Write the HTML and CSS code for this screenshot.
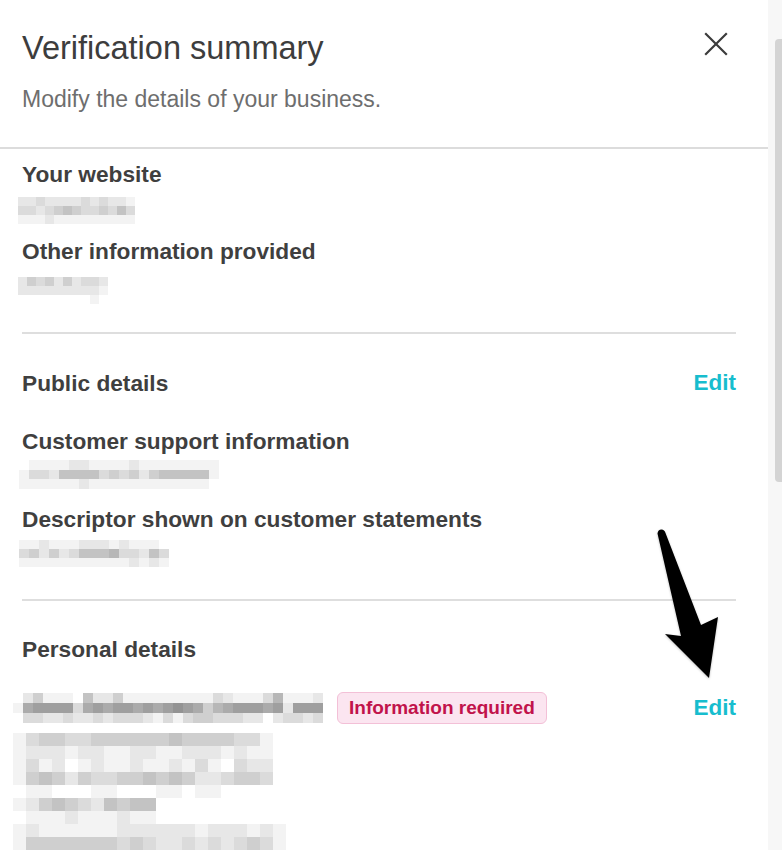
FILE: index.html
```html
<!DOCTYPE html>
<html lang="en">
<head>
<meta charset="utf-8">
<title>Verification summary</title>
<link rel="stylesheet" href="styles.css">
</head>
<body>
<div class="window">
  <main class="panel">
    <header class="head">
      <div class="head-row">
        <h1 class="title">Verification summary</h1>
        <button class="close" aria-label="Close">
          <svg viewBox="0 0 24 24" width="24" height="24"><path d="M1.2 1.2 L22.8 22.8 M22.8 1.2 L1.2 22.8" fill="none" stroke="#3c3c3c" stroke-width="2.2"/></svg>
        </button>
      </div>
      <p class="subtitle">Modify the details of your business.</p>
    </header>

    <section class="section s-business">
      <h3 class="label">Your website</h3>
      <div class="mosaic m-web" data-rows="22322223232210|33234543343530|11121111111110"></div>
      <h3 class="label l-other">Other information provided</h3>
      <div class="mosaic m-other" data-rows="2434242332|2222222221|0000000010"></div>
    </section>

    <section class="section s-public">
      <div class="section-head">
        <h2 class="label">Public details</h2>
        <a class="edit" href="#">Edit</a>
      </div>
      <h3 class="label l-support">Customer support information</h3>
      <div class="mosaic m-support" data-rows="01111221111211111111|13325555343424555551|11111121111111111110"></div>
      <h3 class="label l-desc">Descriptor shown on customer statements</h3>
      <div class="mosaic m-desc" data-rows="112111222121110|342423555633253|111111111112121"></div>
    </section>

    <section class="section s-personal">
      <h2 class="label">Personal details</h2>
      <div class="person-row">
        <div class="mosaic m-name" data-rows="0241110522411111111132111361112|1788883787887878987467888782888|0332232232333213134433322023323"></div>
        <span class="badge">Information required</span>
        <a class="edit" href="#">Edit</a>
      </div>
      <div class="mosaic m-block" data-rows="1344334444445444433100|1222122112211222121100|1312012112112131032200|1454243344545422344300|0110001100011011000000|1245432545500000000000|0111211121100000000000|1211111122222212221210|1444444434322323234310"></div>
    </section>

    <svg class="arrow" viewBox="0 0 100 180" width="100" height="180" aria-hidden="true">
      <path d="M17.5 13.5 Q18 9.5 21.5 9.5 Q24.5 9.8 25.5 13 L61 105 L78 97 L69 158 L25 114 L41 116 Z" fill="#000"/>
    </svg>
  </main>
  <div class="scrollbar"><div class="thumb"></div></div>
</div>
<script src="script.js"></script>
</body>
</html>
```

FILE: styles.css
```css
* { box-sizing: border-box; }

html, body {
  margin: 0;
  padding: 0;
  background: #ffffff;
}

body {
  font-family: "Liberation Sans", Arial, Helvetica, sans-serif;
  color: #3d3d3d;
  height: 850px;
  overflow: hidden;
}

.window {
  display: flex;
  width: 782px;
  height: 850px;
}

.panel {
  position: relative;
  flex: 1;
  height: 850px;
  overflow: hidden;
  background: #fff;
}

.head {
  padding: 28px 40px 34px 22px;
  border-bottom: 2px solid #dcdcdc;
}

.head-row {
  display: flex;
  justify-content: space-between;
  align-items: flex-start;
}

.title {
  margin: 0;
  font-size: 32.5px;
  line-height: 40px;
  font-weight: normal;
  color: #3d3d3d;
}

.close {
  width: 24px;
  height: 24px;
  margin-top: 4px;
  padding: 0;
  border: 0;
  background: none;
  display: flex;
}

.subtitle {
  margin: 17px 0 0;
  font-size: 23px;
  line-height: 28px;
  color: #6e6e6e;
}

.section {
  margin: 0 32px 0 22px;
}

.s-business {
  padding-top: 12px;
  padding-bottom: 28px;
  border-bottom: 2px solid #dedede;
}

.s-public {
  padding-top: 36px;
  padding-bottom: 32px;
  border-bottom: 2px solid #dedede;
}

.s-personal {
  padding-top: 35px;
}

.label {
  margin: 0;
  font-size: 22.7px;
  line-height: 26px;
  font-weight: bold;
  color: #3f3f3f;
}

.section-head {
  display: flex;
  justify-content: space-between;
  align-items: center;
}

.edit {
  font-size: 22.5px;
  line-height: 26px;
  font-weight: bold;
  color: #17bdce;
  text-decoration: none;
}

.l-other { margin-top: 14px; }
.l-support { margin-top: 32px; }
.l-desc { margin-top: 17.5px; }

/* pixelated (redacted) values */
.mosaic {
  --cw: 9px;
  --ch: 9px;
  display: flex;
  flex-direction: column;
  filter: blur(0.35px);
}

.mosaic-row {
  display: flex;
  height: var(--ch);
}

.cell {
  width: var(--cw);
  height: 100%;
}

.m-web { margin: 10px 0 0 -4px; }
.m-other { margin: 13px 0 0 -4px; }
.m-support { --cw: 10px; --ch: 9.5px; margin: 6px 0 0 -3px; }
.m-desc { --cw: 10px; --ch: 9px; margin: 8px 0 0 -3px; }
.m-name { --cw: 10px; --ch: 10px; margin-left: -9px; }
.m-block { --cw: 13px; --ch: 13px; margin: 9px 0 0 -9px; }

.person-row {
  display: flex;
  align-items: center;
  margin-top: 30px;
  height: 32px;
}

.badge {
  margin-left: 14px;
  height: 32px;
  padding: 0 11px;
  border: 1px solid #f3c0d7;
  border-radius: 6px;
  background: #fbe5f0;
  color: #c1134b;
  font-size: 19px;
  line-height: 30px;
  font-weight: bold;
  white-space: nowrap;
}

.person-row .edit {
  margin-left: auto;
}

.arrow {
  position: absolute;
  left: 640px;
  top: 520px;
  filter: drop-shadow(0 1px 1px rgba(0, 0, 0, 0.25));
}

.scrollbar {
  width: 14px;
  height: 850px;
  background: #f7f7f7;
  padding-top: 39px;
  overflow: hidden;
}

.thumb {
  margin-left: 7px;
  width: 8px;
  height: 443px;
  background: #d4d4d4;
  border-radius: 4px 0 0 4px;
}
```

FILE: script.js
```js
document.querySelectorAll('.mosaic').forEach(function (el) {
  var rows = (el.dataset.rows || '').split('|');
  rows.forEach(function (r) {
    var row = document.createElement('div');
    row.className = 'mosaic-row';
    for (var i = 0; i < r.length; i++) {
      var d = parseInt(r[i], 10) || 0;
      var cell = document.createElement('span');
      cell.className = 'cell';
      if (d > 0) {
        var g = 255 - d * 12;
        cell.style.background = 'rgb(' + g + ',' + g + ',' + g + ')';
      }
      row.appendChild(cell);
    }
    el.appendChild(row);
  });
});
```
